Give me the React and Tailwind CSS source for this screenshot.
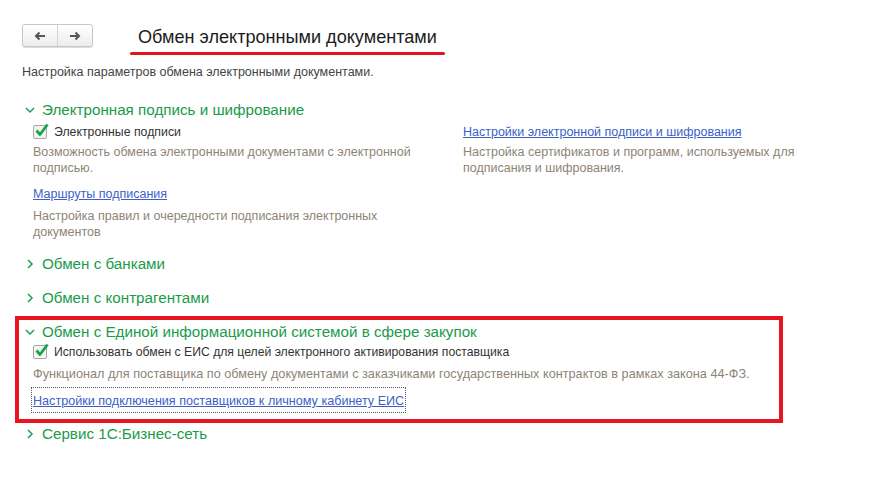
import React from 'react';

const Chevron = ({ open }) => (
    <svg width="10" height="10" viewBox="0 0 10 10" className="shrink-0">
        {open ? (
            <path d="M1 3 L5 7 L9 3" fill="none" stroke="#1f9d55" strokeWidth="1.5" />
        ) : (
            <path d="M3 1 L7 5 L3 9" fill="none" stroke="#1f9d55" strokeWidth="1.5" />
        )}
    </svg>
);

const Checkbox = () => (
    <span className="relative inline-block w-[14px] h-[14px] border border-[#a9a9a9] rounded-[2px] bg-[#f4f4f4] shrink-0">
        <svg width="16" height="16" viewBox="0 0 16 16" className="absolute left-[0px] top-[-4px]">
            <path d="M2.5 8.5 L6 12.5 L13.5 2.5" fill="none" stroke="#17a34a" strokeWidth="2.8" strokeLinejoin="round" />
        </svg>
    </span>
);

const Header = ({ open, children, className = '' }) => (
    <div className={`flex items-center h-[20px] pl-[3px] ${className}`}>
        <Chevron open={open} />
        <span className="ml-[7px] text-[15.2px] text-[#1a9b4a] leading-[20px]">{children}</span>
    </div>
);

const Desc = ({ children, className = '' }) => (
    <div className={`text-[12.5px] leading-[16px] text-[#8d8476] ${className}`}>{children}</div>
);

const Link = ({ children, className = '' }) => (
    <span className={`text-[12.5px] leading-[16px] text-[#3b5fc8] underline ${className}`}>{children}</span>
);

export default function App() {
    return (
        <div className="w-[870px] h-[477px] bg-white pl-[22px] pt-[24px] overflow-hidden" style={{ fontFamily: '"Liberation Sans", Arial, sans-serif' }}>
            {/* top bar */}
            <div className="flex items-start">
                <div className="flex h-[23px] w-[71px] border border-[#c8c8c8] rounded-[3px] bg-gradient-to-b from-white to-[#ececec] shadow-[0_1px_1px_rgba(0,0,0,0.15)]">
                    <div className="flex-1 flex items-center justify-center border-r border-[#d4d4d4]">
                        <svg width="12" height="10" viewBox="0 0 12 10">
                            <path d="M11 5 H3 M5.5 1.5 L2 5 L5.5 8.5" fill="none" stroke="#555" strokeWidth="2" />
                        </svg>
                    </div>
                    <div className="flex-1 flex items-center justify-center">
                        <svg width="12" height="10" viewBox="0 0 12 10">
                            <path d="M1 5 H9 M6.5 1.5 L10 5 L6.5 8.5" fill="none" stroke="#555" strokeWidth="2" />
                        </svg>
                    </div>
                </div>
                <div className="ml-[37px] mt-[2px] flex flex-col">
                    <span className="px-[8px] text-[18.1px] leading-[22px] text-[#1c1c1c]">Обмен электронными документами</span>
                    <div className="mt-[4px] h-[3px] rounded-full bg-[#e3141f]" />
                </div>
            </div>

            <div className="mt-[9px] text-[12.5px] leading-[16px] text-[#444]">Настройка параметров обмена электронными документами.</div>

            {/* Электронная подпись */}
            <Header open className="mt-[20px]">Электронная подпись и шифрование</Header>
            <div className="flex pl-[11px]">
                <div className="w-[430px]">
                    <div className="flex items-center gap-[7px] h-[18px] mt-[3px]">
                        <Checkbox />
                        <span className="text-[12.3px] text-[#333]">Электронные подписи</span>
                    </div>
                    <Desc className="mt-[3px] w-[400px]">Возможность обмена электронными документами с электронной подписью.</Desc>
                    <div className="mt-[5px] h-[16px]"><Link>Маршруты подписания</Link></div>
                    <Desc className="mt-[11px] w-[370px]">Настройка правил и очередности подписания электронных документов</Desc>
                </div>
                <div className="w-[345px]">
                    <div className="h-[18px] mt-[3px] flex items-center"><Link>Настройки электронной подписи и шифрования</Link></div>
                    <Desc className="mt-[3px]">Настройка сертификатов и программ, используемых для подписания и шифрования.</Desc>
                </div>
            </div>

            <Header className="mt-[14px]">Обмен с банками</Header>
            <Header className="mt-[14px]">Обмен с контрагентами</Header>

            {/* ЕИС */}
            <div className="ml-[-7px] mt-[8px] w-[768px] border-[4px] border-[#e8141e] pl-[3px] pt-[2px] pb-[6px]">
                <Header open>Обмен с Единой информационной системой в сфере закупок</Header>
                <div className="pl-[11px]">
                    <div className="flex items-center gap-[7px] h-[18px] mt-[1px]">
                        <Checkbox />
                        <span className="text-[12.2px] text-[#333]">Использовать обмен с ЕИС для целей электронного активирования поставщика</span>
                    </div>
                    <Desc className="mt-[5px] text-[12.7px]">Функционал для поставщика по обмену документами с заказчиками государственных контрактов в рамках закона 44-ФЗ.</Desc>
                </div>
                <div className="mt-[5px] ml-[9px] inline-block border border-dotted border-[#555] px-[1px]">
                    <Link className="text-[12.6px]">Настройки подключения поставщиков к личному кабинету ЕИС</Link>
                </div>
            </div>

            <Header className="mt-[1px]">Сервис 1С:Бизнес-сеть</Header>
        </div>
    );
}
